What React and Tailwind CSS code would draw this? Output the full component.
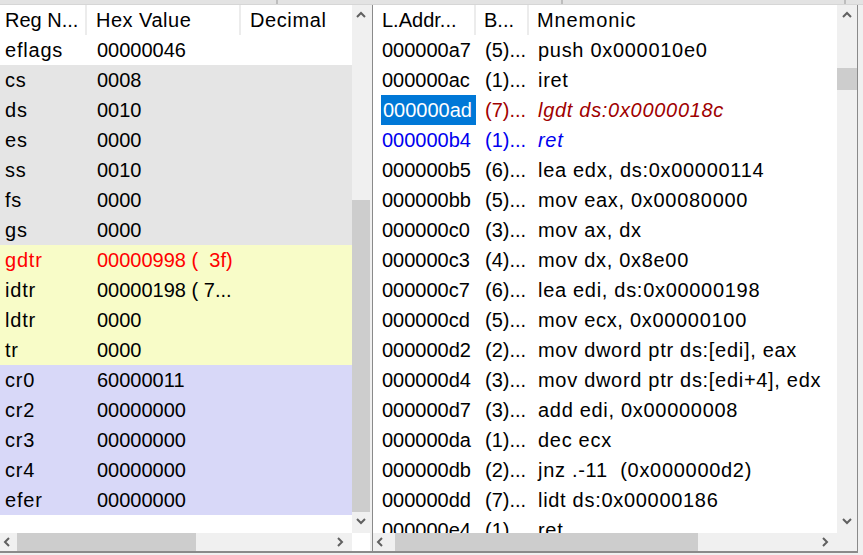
const regs = [
  { n: "eflags", v: "00000046", bg: "bg-white" },
  { n: "cs", v: "0008", bg: "bg-[#e5e5e5]" },
  { n: "ds", v: "0010", bg: "bg-[#e5e5e5]" },
  { n: "es", v: "0000", bg: "bg-[#e5e5e5]" },
  { n: "ss", v: "0010", bg: "bg-[#e5e5e5]" },
  { n: "fs", v: "0000", bg: "bg-[#e5e5e5]" },
  { n: "gs", v: "0000", bg: "bg-[#e5e5e5]" },
  { n: "gdtr", v: "00000998 (  3f)", bg: "bg-[#f8fcc8]", red: true },
  { n: "idtr", v: "00000198 ( 7...", bg: "bg-[#f8fcc8]" },
  { n: "ldtr", v: "0000", bg: "bg-[#f8fcc8]" },
  { n: "tr", v: "0000", bg: "bg-[#f8fcc8]" },
  { n: "cr0", v: "60000011", bg: "bg-[#d8d8f8]" },
  { n: "cr2", v: "00000000", bg: "bg-[#d8d8f8]" },
  { n: "cr3", v: "00000000", bg: "bg-[#d8d8f8]" },
  { n: "cr4", v: "00000000", bg: "bg-[#d8d8f8]" },
  { n: "efer", v: "00000000", bg: "bg-[#d8d8f8]" },
];

const asm = [
  ["000000a7", "(5)...", "push 0x000010e0"],
  ["000000ac", "(1)...", "iret"],
  ["000000ad", "(7)...", "lgdt ds:0x0000018c", "sel"],
  ["000000b4", "(1)...", "ret", "blue"],
  ["000000b5", "(6)...", "lea edx, ds:0x00000114"],
  ["000000bb", "(5)...", "mov eax, 0x00080000"],
  ["000000c0", "(3)...", "mov ax, dx"],
  ["000000c3", "(4)...", "mov dx, 0x8e00"],
  ["000000c7", "(6)...", "lea edi, ds:0x00000198"],
  ["000000cd", "(5)...", "mov ecx, 0x00000100"],
  ["000000d2", "(2)...", "mov dword ptr ds:[edi], eax"],
  ["000000d4", "(3)...", "mov dword ptr ds:[edi+4], edx"],
  ["000000d7", "(3)...", "add edi, 0x00000008"],
  ["000000da", "(1)...", "dec ecx"],
  ["000000db", "(2)...", "jnz .-11  (0x000000d2)"],
  ["000000dd", "(7)...", "lidt ds:0x00000186"],
  ["000000e4", "(1)...", "ret"],
];

const Chevron = ({ dir }) => {
  const d = {
    up: "M1 6 L5 2 L9 6",
    down: "M1 2 L5 6 L9 2",
    left: "M6 1 L2 5 L6 9",
    right: "M2 1 L6 5 L2 9",
  }[dir];
  const vert = dir === "up" || dir === "down";
  return (
    <svg width={vert ? 10 : 8} height={vert ? 8 : 10} viewBox={vert ? "0 0 10 8" : "0 0 8 10"}>
      <path d={d} fill="none" stroke="#606060" strokeWidth="2" />
    </svg>
  );
};

const VScroll = ({ w, thumbTop, thumbH }) => (
  <div className={`relative h-full bg-[#f0f0f0] ${w}`}>
    <div className="absolute top-[6px] left-0 right-0 flex justify-center">
      <Chevron dir="up" />
    </div>
    <div
      className="absolute left-0 right-0 bg-[#cdcdcd]"
      style={{ top: thumbTop, height: thumbH }}
    />
    <div className="absolute bottom-[8px] left-0 right-0 flex justify-center">
      <Chevron dir="down" />
    </div>
  </div>
);

const HScroll = ({ thumbLeft, thumbW }) => (
  <div className="relative h-[18px] flex-1 bg-[#f0f0f0]">
    <div className="absolute left-[3px] top-[4px]">
      <Chevron dir="left" />
    </div>
    <div
      className="absolute top-0 bottom-0 bg-[#cdcdcd]"
      style={{ left: thumbLeft, width: thumbW }}
    />
    <div className="absolute right-[8px] top-[4px]">
      <Chevron dir="right" />
    </div>
  </div>
);

const RegisterPanel = () => (
  <div className="flex flex-col w-[370px] h-full bg-white">
    <div className="flex flex-1 min-h-0">
      <div className="w-[352px] h-full overflow-hidden">
        <div className="flex h-[30px] items-center">
          <div className="w-[87px] h-full flex items-center pl-[5px] border-r-2 border-[#ececec]">Reg N...</div>
          <div className="w-[154px] h-full flex items-center pl-[9px] tracking-[0.5px] border-r-2 border-[#ececec]">Hex Value</div>
          <div className="flex-1 pl-[9px] tracking-[0.6px]">Decimal</div>
        </div>
        {regs.map((r) => (
          <div key={r.n} className={`flex h-[30px] items-center ${r.bg} ${r.red ? "text-[#ff0000]" : ""}`}>
            <div className="w-[87px] pl-[5px] tracking-[0.8px]">{r.n}</div>
            <div className="w-[154px] pl-[10px] whitespace-pre">{r.v}</div>
          </div>
        ))}
      </div>
      <VScroll w="w-[18px]" thumbTop={195} thumbH={312} />
    </div>
    <div className="flex">
      <HScroll thumbLeft={17} thumbW={179} />
      <div className="w-[18px] bg-white" />
    </div>
  </div>
);

const DisasmPanel = () => (
  <div className="flex flex-col w-[486px] h-full bg-white border-x border-[#8a8a8a]">
    <div className="flex flex-1 min-h-0">
      <div className="w-[464px] h-full overflow-hidden">
        <div className="flex h-[30px] items-center">
          <div className="w-[103px] h-full flex items-center pl-[9px] border-r-2 border-[#ececec]">L.Addr...</div>
          <div className="w-[53px] h-full flex items-center pl-[8px] border-r-2 border-[#ececec]">B...</div>
          <div className="flex-1 pl-[8px] tracking-[0.9px]">Mnemonic</div>
        </div>
        {asm.map(([addr, len, text, kind]) => (
          <div
            key={addr}
            className={`flex h-[30px] items-center whitespace-pre ${
              kind === "sel" ? "text-[#a00000]" : kind === "blue" ? "text-[#0000ee]" : ""
            }`}
          >
            <div className="w-[103px] h-full flex items-center pl-[8px]">
              {kind === "sel" ? (
                <div className="flex-1 h-full flex items-center pl-[2px] bg-[#0078d7] text-white">{addr}</div>
              ) : (
                <span className="pl-[1px]">{addr}</span>
              )}
            </div>
            <div className="w-[53px] pl-[9px]">{len}</div>
            <div className={`flex-1 pl-[9px] tracking-[0.7px] ${kind ? "italic" : ""}`}>{text}</div>
          </div>
        ))}
      </div>
      <VScroll w="w-[20px]" thumbTop={63} thumbH={22} />
    </div>
    <div className="flex">
      <HScroll thumbLeft={22} thumbW={303} />
      <div className="w-[20px] bg-[#f0f0f0]" />
    </div>
  </div>
);

export default function App() {
  return (
    <div className="w-[863px] h-[555px] overflow-hidden flex flex-col bg-[#f0f0f0] text-[20px] leading-none text-black font-['Liberation_Sans',Arial,sans-serif]">
      <div className="h-[5px] flex bg-[#e3e3e3] border-b border-[#d6d6d6]">
        <div className="w-[278px] border-r-2 border-[#bdbdbd]" />
        <div className="w-[285px] border-r-2 border-[#bdbdbd]" />
        <div className="w-[283px] border-r-2 border-[#bdbdbd]" />
      </div>
      <div className="flex h-[546px]">
        <RegisterPanel />
        <div className="w-[2px]" />
        <DisasmPanel />
      </div>
      <div className="h-[2px] bg-[#8a8a8a] w-[858px]" />
    </div>
  );
}
